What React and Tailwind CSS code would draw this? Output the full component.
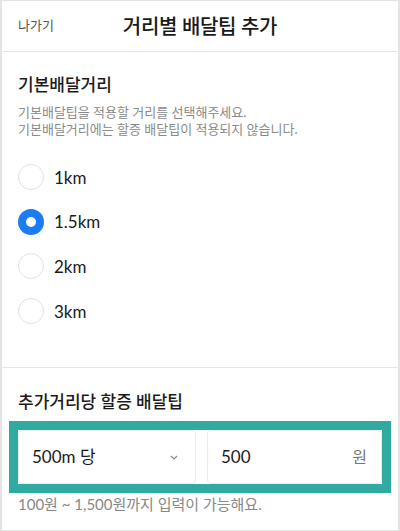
import { useState } from 'react';

const options = ['1km', '1.5km', '2km', '3km'];

function Radio({ checked }) {
  return checked ? (
    <span className="w-[26px] h-[26px] rounded-full bg-[#1b7cf4] flex items-center justify-center shrink-0">
      <span className="w-[10px] h-[10px] rounded-full bg-white" />
    </span>
  ) : (
    <span className="w-[26px] h-[26px] rounded-full border-[1.5px] border-[#e2e2e2] bg-white shrink-0" />
  );
}

export default function App() {
  const [selected, setSelected] = useState('1.5km');

  return (
    <div
      className="w-[400px] h-[531px] overflow-hidden bg-white border-x-2 border-y border-[#e4e4e4] text-[#1a1a1a] flex flex-col"
      style={{ fontFamily: 'Lato, "Noto Sans CJK KR", sans-serif' }}
    >
      {/* header */}
      <div className="h-[51px] shrink-0 border-b border-[#e6e6e6] flex items-center relative">
        <span className="absolute left-[16px] text-[13px] text-[#555]">나가기</span>
        <h1 className="w-full text-center text-[20px] font-medium tracking-[-0.3px]">거리별 배달팁 추가</h1>
      </div>

      {/* basic distance */}
      <div className="h-[316px] shrink-0 border-b border-[#e6e6e6] px-[16px] pt-[21px]">
        <h2 className="text-[17px] font-medium leading-[24px]">기본배달거리</h2>
        <p className="mt-[7px] text-[13px] leading-[17px] text-[#8a8a8a]">
          기본배달팁을 적용할 거리를 선택해주세요.
          <br />
          기본배달거리에는 할증 배달팁이 적용되지 않습니다.
        </p>
        <div className="mt-[26px] flex flex-col gap-[18.7px]">
          {options.map((o) => (
            <button
              key={o}
              onClick={() => setSelected(o)}
              className="flex items-center gap-[10px] h-[26px] text-left"
            >
              <Radio checked={selected === o} />
              <span className="text-[17px] leading-none">{o}</span>
            </button>
          ))}
        </div>
      </div>

      {/* surcharge */}
      <div className="px-[16px] pt-[22px]">
        <h2 className="text-[17px] font-medium leading-[24px]">추가거리당 할증 배달팁</h2>
        <div className="mt-[7px] -mx-[9px] border-[9px] border-[#31aba2] bg-white flex gap-[11px]">
          <div className="flex-1 h-[54px] rounded-[4px] border border-[#ececec] bg-white flex items-center justify-between pl-[13px] pr-[17px]">
            <span className="text-[17px]">500m 당</span>
            <svg width="8" height="5" viewBox="0 0 8 5" fill="none" stroke="#888" strokeWidth="1.2">
              <path d="M1 1l3 3 3-3" />
            </svg>
          </div>
          <div className="flex-1 h-[54px] rounded-[4px] border border-[#ececec] bg-white flex items-center justify-between pl-[13px] pr-[14px]">
            <span className="text-[17px]">500</span>
            <span className="text-[16px] text-[#777]">원</span>
          </div>
        </div>
        <p className="mt-[1px] text-[15px] leading-[20px] text-[#888]">100원 ~ 1,500원까지 입력이 가능해요.</p>
      </div>
    </div>
  );
}
